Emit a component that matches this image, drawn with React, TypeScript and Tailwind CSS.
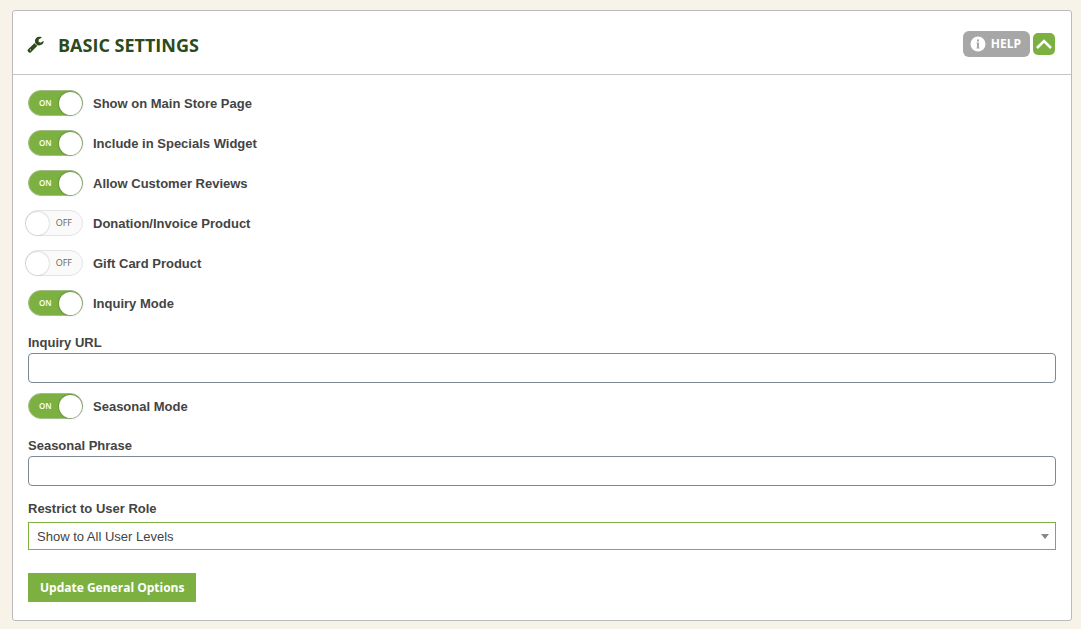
import React, { useState } from 'react';

interface ToggleRowProps {
  id: string;
  label: string;
  checked: boolean;
  onChange: (id: string) => void;
}

const WrenchIcon: React.FC = () => (
  <svg viewBox="0 64 1664 1728" className="h-[17px] w-[17px]" fill="currentColor" aria-hidden="true">
    <path d="M384 1472q0-26-19-45t-45-19-45 19-19 45 19 45 45 19 45-19 19-45zm644-420l-682 682q-37 37-90 37-52 0-91-37l-106-108q-38-36-38-90 0-53 38-91l681-681q39 98 114.5 173.5t173.5 114.5zm634-435q0 39-23 106-47 134-164.5 217.5t-258.5 83.5q-185 0-316.5-131.5t-131.5-316.5 131.5-316.5 316.5-131.5q58 0 121.500 16.500t107.500 46.500q16 11 16 28t-16 28l-293 169v224l193 107q5-3 79-48.500t135.500-81 70.500-35.500q15 0 23.500 10t8.500 25z" />
  </svg>
);

const InfoIcon: React.FC = () => (
  <svg viewBox="0 0 16 16" className="h-4 w-4" aria-hidden="true">
    <circle cx="8" cy="8" r="7.5" fill="#fff" />
    <path d="M7 3.500h2v2H7zM6.500 6.500H9v5h.500v1h-3v-1H7v-4h-.500z" fill="#a7a7a7" />
  </svg>
);

const ToggleRow: React.FC<ToggleRowProps> = ({ id, label, checked, onChange }) => (
  <label
    htmlFor={id}
    className="relative -ml-[3px] flex h-10 w-fit cursor-pointer items-center gap-[10px]"
  >
    <input
      id={id}
      type="checkbox"
      role="switch"
      checked={checked}
      onChange={() => onChange(id)}
      className="sr-only"
    />
    <span aria-hidden="true" className="flex w-[58px] justify-end font-['Open_Sans',sans-serif]">
      {checked ? (
        <span className="flex h-[26px] w-[55px] items-center justify-between rounded-full border border-[#a3bd88] bg-[#7cb142] pl-[10px] text-[8px] font-semibold text-white">
          ON
          <span className="h-[23px] w-[23px] rounded-full bg-white shadow-[0_0_2px_0_rgba(0,0,0,0.5)]" />
        </span>
      ) : (
        <span className="flex h-[26px] w-[58px] items-center justify-between rounded-full border border-[#e4e4e4] bg-[#fafafa] pr-[10px] text-[9px] font-normal text-[#666]">
          <span className="h-[23px] w-[23px] rounded-full bg-white shadow-[0_0_2px_0_rgba(0,0,0,0.3)]" />
          OFF
        </span>
      )}
    </span>
    <span className="pt-px">{label}</span>
  </label>
);

interface TextFieldProps {
  id: string;
  label: string;
}

const TextField: React.FC<TextFieldProps> = ({ id, label }) => (
  <div className="mb-[3px] pt-[10px]">
    <label htmlFor={id} className="block leading-5">
      {label}
    </label>
    <input
      id={id}
      type="text"
      className="block h-[30px] w-full rounded border border-[#7e8993] bg-white px-2 font-normal"
    />
  </div>
);

const toggles = [
  { id: 'main-store', label: 'Show on Main Store Page' },
  { id: 'specials', label: 'Include in Specials Widget' },
  { id: 'reviews', label: 'Allow Customer Reviews' },
  { id: 'donation', label: 'Donation/Invoice Product' },
  { id: 'gift-card', label: 'Gift Card Product' },
  { id: 'inquiry', label: 'Inquiry Mode' },
];

const App: React.FC = () => {
  const [open, setOpen] = useState(true);
  const [values, setValues] = useState<Record<string, boolean>>({
    'main-store': true,
    specials: true,
    reviews: true,
    donation: false,
    'gift-card': false,
    inquiry: true,
    seasonal: true,
  });

  const toggle = (id: string) => setValues((prev) => ({ ...prev, [id]: !prev[id] }));

  return (
    <main className="min-h-screen bg-[#f7f3e8] pt-[10px] pr-[9px] pb-2 pl-3 font-['Liberation_Sans',Arial,sans-serif] text-[13px] font-bold text-[#444]">
      <section className="rounded-[3px] border border-[#bbb] bg-white">
        <header className="flex h-16 items-center justify-between border-b border-[#c3c4c7] pt-[3px] pr-4 pl-[14px] font-['Open_Sans',sans-serif]">
          <div className="flex items-center gap-[14px] text-[#2c4a1a]">
            <WrenchIcon />
            <h2 className="pt-[3px] text-[18px] font-bold">BASIC SETTINGS</h2>
          </div>
          <div className="flex items-center gap-[3px]">
            <button
              type="button"
              className="flex h-[26px] items-center gap-[5px] rounded-md bg-[#a7a7a7] pr-[9px] pl-[7px] text-[12px] text-white"
            >
              <InfoIcon />
              HELP
            </button>
            <button
              type="button"
              aria-label="Toggle panel"
              aria-expanded={open}
              onClick={() => setOpen(!open)}
              className="flex h-[22px] w-[22px] items-center justify-center rounded-[5px] bg-[#7cb142]"
            >
              <svg viewBox="0 0 16 10" className="h-[10px] w-4" fill="none" stroke="#fff" strokeWidth="2.5">
                <path d="M1 9 8 2l7 7" />
              </svg>
            </button>
          </div>
        </header>

        {open && (
          <form className="px-[15px] pt-2 pb-[18px]" onSubmit={(e) => e.preventDefault()}>
            {toggles.map((t) => (
              <ToggleRow key={t.id} {...t} checked={values[t.id]} onChange={toggle} />
            ))}
            <TextField id="inquiry-url" label="Inquiry URL" />
            <ToggleRow
              id="seasonal"
              label="Seasonal Mode"
              checked={values.seasonal}
              onChange={toggle}
            />
            <TextField id="seasonal-phrase" label="Seasonal Phrase" />

            <div className="pt-[10px]">
              <label htmlFor="user-role" className="mb-[3px] block leading-5">
                Restrict to User Role
              </label>
              <div className="relative">
                <select
                  id="user-role"
                  className="block h-7 w-full appearance-none border border-[#7cb142] bg-white pt-px pr-6 pl-2 font-normal text-[#444]"
                >
                  <option>Show to All User Levels</option>
                </select>
                <span className="pointer-events-none absolute top-3 right-[7px] border-x-4 border-t-5 border-x-transparent border-t-[#888]" />
              </div>
            </div>

            <button
              type="submit"
              className="mt-[23px] block h-[29px] bg-[#7cb142] px-3 pt-px font-['Open_Sans',sans-serif] text-[12px] text-white"
            >
              Update General Options
            </button>
          </form>
        )}
      </section>
    </main>
  );
};

export default App;
